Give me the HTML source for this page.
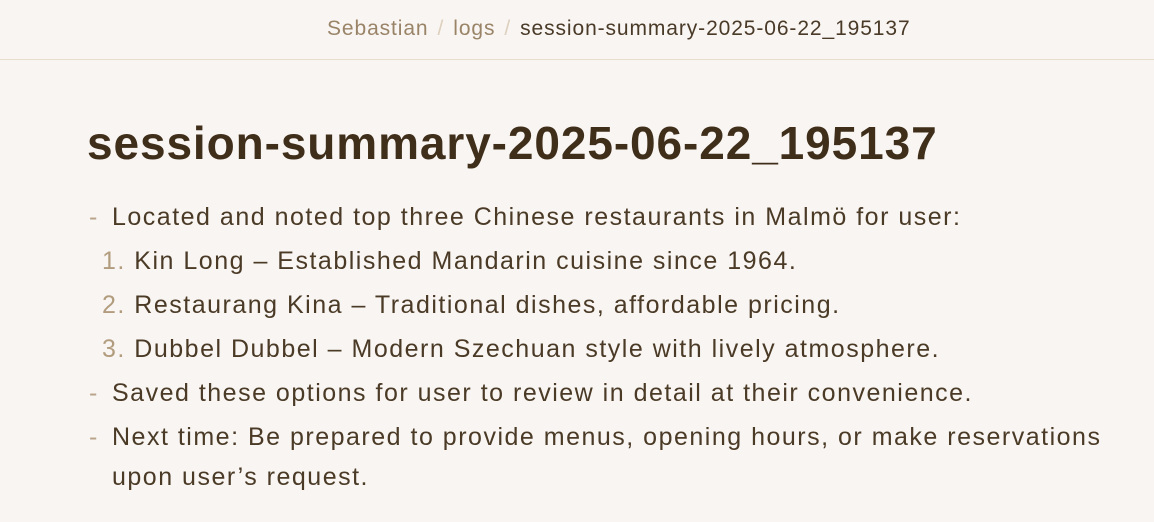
<!DOCTYPE html>
<html><head><meta charset="utf-8"><style>
html,body{margin:0;padding:0;background:#f8f5f2;width:1154px;height:522px;overflow:hidden;font-family:"Liberation Sans",sans-serif;}
.hdr{height:60px;border-bottom:1px solid #e8dccb;box-sizing:border-box;}
.bc{position:absolute;top:17px;left:327px;font-size:21px;color:#9a8468;white-space:nowrap;letter-spacing:0.9px}
.bc .s{color:#ddd0bd;margin:0 9px}
.bc .c{color:#4a3a28}
h1{position:absolute;left:87px;top:116px;margin:0;font-size:46px;font-weight:bold;color:#3f2e1a;letter-spacing:0.9px;white-space:nowrap}
.l{position:absolute;font-size:25px;color:#4a3a26;white-space:nowrap;letter-spacing:1.5px}
.d{position:absolute;left:89px;color:#b9a48a;font-size:25px}
.n{color:#b29c7e}
</style></head><body>
<div class="hdr"></div>
<div class="bc">Sebastian<span class="s">/</span>logs<span class="s">/</span><span class="c">session-summary-2025-06-22_195137</span></div>
<h1>session-summary-2025-06-22_195137</h1>
<div class="d" style="top:203px">-</div><div class="l" style="left:112px;top:203px">Located and noted top three Chinese restaurants in Malmö for user:</div>
<div class="l" style="left:102px;top:247px"><span class="n">1.</span> Kin Long – Established Mandarin cuisine since 1964.</div>
<div class="l" style="left:102px;top:291px"><span class="n">2.</span> Restaurang Kina – Traditional dishes, affordable pricing.</div>
<div class="l" style="left:102px;top:335px"><span class="n">3.</span> Dubbel Dubbel – Modern Szechuan style with lively atmosphere.</div>
<div class="d" style="top:379px">-</div><div class="l" style="left:112px;top:379px">Saved these options for user to review in detail at their convenience.</div>
<div class="d" style="top:423px">-</div><div class="l" style="left:112px;top:423px">Next time: Be prepared to provide menus, opening hours, or make reservations</div>
<div class="l" style="left:112px;top:463px">upon user’s request.</div>
</body></html>
